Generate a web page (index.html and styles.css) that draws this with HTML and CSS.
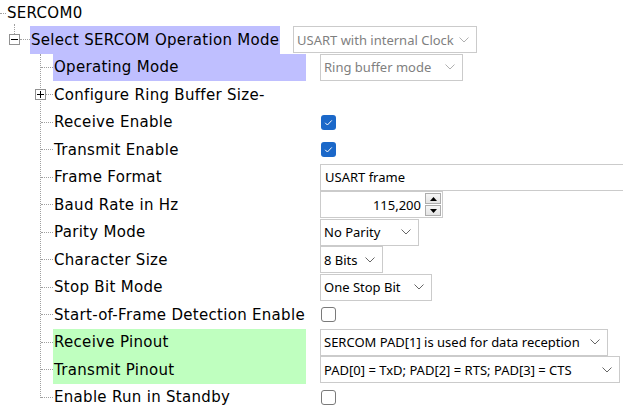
FILE: index.html
```html
<!DOCTYPE html>
<html>
<head>
<meta charset="utf-8">
<link rel="stylesheet" href="styles.css">
</head>
<body>
<div class="tree">
  <div class="row r0">
    <span class="dash0"></span>
    <span class="lbl">SERCOM0</span>
  </div>
  <div class="row r1">
    <span class="exp"><span class="hbar"></span></span>
    <span class="conn1"></span>
    <span class="lbl l1 hl-blue">Select SERCOM Operation Mode</span>
    <div class="combo dis w-usart"><span>USART with internal Clock</span><svg class="chev" width="10" height="6" viewBox="0 0 10 6"><polyline points="0.5,0.5 5,5 9.5,0.5" fill="none" stroke="currentColor" stroke-width="1"/></svg></div>
  </div>
  <div class="kids">
    <div class="row">
      <span class="conn"></span>
      <span class="lbl l2 hl-blue">Operating Mode</span>
      <div class="combo dis w-ring"><span>Ring buffer mode</span><svg class="chev" width="10" height="6" viewBox="0 0 10 6"><polyline points="0.5,0.5 5,5 9.5,0.5" fill="none" stroke="currentColor" stroke-width="1"/></svg></div>
    </div>
    <div class="row">
      <span class="exp exp2"><span class="hbar"></span><span class="vbar"></span></span>
      <span class="conn2"></span>
      <span class="lbl l2">Configure Ring Buffer Size-</span>
    </div>
    <div class="row">
      <span class="conn"></span>
      <span class="lbl l2">Receive Enable</span>
      <span class="check on"><svg width="15" height="15" viewBox="0 0 15 15"><polyline points="4.2,7.8 6.4,10 10.8,5.4" fill="none" stroke="#fff" stroke-width="1"/></svg></span>
    </div>
    <div class="row">
      <span class="conn"></span>
      <span class="lbl l2">Transmit Enable</span>
      <span class="check on"><svg width="15" height="15" viewBox="0 0 15 15"><polyline points="4.2,7.8 6.4,10 10.8,5.4" fill="none" stroke="#fff" stroke-width="1"/></svg></span>
    </div>
    <div class="row">
      <span class="conn"></span>
      <span class="lbl l2">Frame Format</span>
      <div class="field w-frame">USART frame</div>
    </div>
    <div class="row">
      <span class="conn"></span>
      <span class="lbl l2">Baud Rate in Hz</span>
      <div class="spin">
        <span class="spin-val">115,200</span>
        <span class="spin-btns">
          <span class="sbtn"><svg width="7" height="4" viewBox="0 0 7 4"><polygon points="0,4 3.5,0 7,4" fill="#000"/></svg></span>
          <span class="sbtn"><svg width="7" height="4" viewBox="0 0 7 4"><polygon points="0,0 3.5,4 7,0" fill="#000"/></svg></span>
        </span>
      </div>
    </div>
    <div class="row">
      <span class="conn"></span>
      <span class="lbl l2">Parity Mode</span>
      <div class="combo w-parity"><span>No Parity</span><svg class="chev" width="10" height="6" viewBox="0 0 10 6"><polyline points="0.5,0.5 5,5 9.5,0.5" fill="none" stroke="currentColor" stroke-width="1"/></svg></div>
    </div>
    <div class="row">
      <span class="conn"></span>
      <span class="lbl l2">Character Size</span>
      <div class="combo w-char"><span>8 Bits</span><svg class="chev" width="10" height="6" viewBox="0 0 10 6"><polyline points="0.5,0.5 5,5 9.5,0.5" fill="none" stroke="currentColor" stroke-width="1"/></svg></div>
    </div>
    <div class="row">
      <span class="conn"></span>
      <span class="lbl l2">Stop Bit Mode</span>
      <div class="combo w-stop"><span>One Stop Bit</span><svg class="chev" width="10" height="6" viewBox="0 0 10 6"><polyline points="0.5,0.5 5,5 9.5,0.5" fill="none" stroke="currentColor" stroke-width="1"/></svg></div>
    </div>
    <div class="row">
      <span class="conn"></span>
      <span class="lbl l2">Start-of-Frame Detection Enable</span>
      <span class="check"></span>
    </div>
    <div class="row">
      <span class="conn"></span>
      <span class="lbl l2 hl-green">Receive Pinout</span>
      <div class="combo w-rx"><span>SERCOM PAD[1] is used for data reception</span><svg class="chev" width="10" height="6" viewBox="0 0 10 6"><polyline points="0.5,0.5 5,5 9.5,0.5" fill="none" stroke="currentColor" stroke-width="1"/></svg></div>
    </div>
    <div class="row">
      <span class="conn"></span>
      <span class="lbl l2 hl-green">Transmit Pinout</span>
      <div class="combo w-tx"><span>PAD[0] = TxD; PAD[2] = RTS; PAD[3] = CTS</span><svg class="chev" width="10" height="6" viewBox="0 0 10 6"><polyline points="0.5,0.5 5,5 9.5,0.5" fill="none" stroke="currentColor" stroke-width="1"/></svg></div>
    </div>
    <div class="row">
      <span class="conn"></span>
      <span class="lbl l2">Enable Run in Standby</span>
      <span class="check"></span>
    </div>
  </div>
</div>
</body>
</html>
```

FILE: styles.css
```css
html, body {
  margin: 0;
  padding: 0;
  background: #ffffff;
}

body {
  width: 623px;
  height: 416px;
  overflow: hidden;
  font-family: "DejaVu Sans", Verdana, sans-serif;
  font-size: 15px;
  letter-spacing: 0.3px;
  color: #000;
}

.tree {
  display: flex;
  flex-direction: column;
}

.row {
  position: relative;
  display: flex;
  align-items: center;
  height: 27.5px;
  white-space: nowrap;
}

.r0 {
  height: 26px;
}

.dash0 {
  width: 6px;
  height: 0;
  border-top: 1px dotted #a0a0a0;
  margin-right: 1px;
}

.lbl {
  display: flex;
  align-items: center;
  height: 100%;
  box-sizing: border-box;
  padding-left: 1px;
}

.r0 .lbl {
  padding-left: 0;
}

/* level 1 */
.r1 {
  padding-left: 9px;
}

.r1::before {
  content: "";
  position: absolute;
  left: 14px;
  top: -2px;
  height: 10px;
  border-left: 1px dotted #a0a0a0;
}

.exp {
  position: relative;
  z-index: 1;
  width: 11px;
  height: 11px;
  box-sizing: border-box;
  border: 1px solid #919191;
  background: #fff;
  flex: none;
}

.hbar {
  position: absolute;
  left: 1px;
  top: 4px;
  width: 7px;
  height: 1px;
  background: #000;
}

.vbar {
  position: absolute;
  left: 4px;
  top: 1px;
  width: 1px;
  height: 7px;
  background: #000;
}

.conn1 {
  width: 10px;
  height: 0;
  border-top: 1px dotted #a0a0a0;
}

.l1 {
  width: 250px;
  margin-right: 13px;
}

/* level 2 */
.kids {
  position: relative;
  display: flex;
  flex-direction: column;
}

.kids::before {
  content: "";
  position: absolute;
  left: 40px;
  top: 0;
  bottom: 13.5px;
  border-left: 1px dotted #a0a0a0;
}

.conn {
  width: 12px;
  height: 0;
  margin-left: 41px;
  border-top: 1px dotted #a0a0a0;
  flex: none;
}

.exp2 {
  margin-left: 35px;
}

.conn2 {
  width: 7px;
  height: 0;
  border-top: 1px dotted #a0a0a0;
  flex: none;
}

.l2 {
  width: 253px;
  margin-right: 14px;
  flex: none;
}

.hl-blue {
  background: #bfbfff;
}

.hl-green {
  background: #bfffbf;
}

/* controls */
.combo,
.field,
.spin {
  height: 27px;
  box-sizing: border-box;
  border: 1px solid #cbcbcb;
  background: #fff;
  font-family: "Noto Sans", "Open Sans", sans-serif;
  font-size: 13px;
  letter-spacing: 0;
  display: flex;
  align-items: center;
  flex: none;
}

.combo {
  justify-content: space-between;
  padding: 0 7px 0 3px;
}

.combo .chev {
  color: #666;
  flex: none;
}

.combo.dis {
  color: #7f7f7f;
}

.combo.dis .chev {
  color: #b0b0b0;
}

.w-usart { width: 184px; }
.w-ring { width: 143px; }
.w-parity { width: 99px; }
.w-char { width: 63px; }
.w-stop { width: 112px; }
.w-rx { width: 288px; }
.w-tx { width: 300px; }

.field {
  padding-left: 4px;
}

.w-frame {
  width: 330px;
}

.spin {
  width: 123px;
  padding: 0 1px 0 4px;
  justify-content: flex-end;
}

.spin-val {
  margin-right: 4px;
}

.spin-btns {
  display: flex;
  flex-direction: column;
  gap: 1px;
}

.sbtn {
  width: 16px;
  height: 11px;
  box-sizing: border-box;
  border: 1px solid #adadad;
  background: linear-gradient(#f6f6f6, #e4e4e4);
  display: flex;
  align-items: center;
  justify-content: center;
}

.check {
  width: 15px;
  height: 15px;
  box-sizing: border-box;
  margin-left: 1px;
  border: 1px solid #7a7a7a;
  border-radius: 3px;
  background: #fff;
  flex: none;
  position: relative;
}

.check.on {
  border: none;
  background: #1b68c9;
}

.check svg {
  display: block;
}
```
